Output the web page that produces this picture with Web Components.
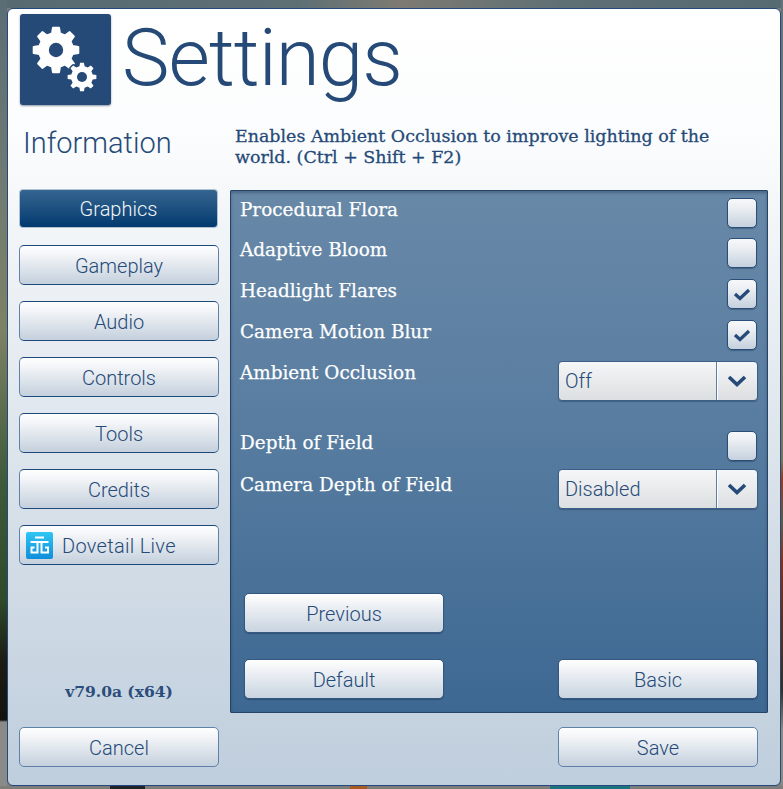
<!DOCTYPE html>
<html>
<head>
<meta charset="utf-8">
<title>Settings</title>
<style>
    html, body { margin: 0; height: 789px; overflow: hidden; }
    body {
        font-family: "Roboto", "Liberation Sans", sans-serif;
        background-color: #7d7d7b;
        background-image:
            linear-gradient(90deg, #7d7d7b 0 110px, #20242a 110px 145px, #7d7d7b 145px 350px, #a85a22 350px 367px, #7d7d7b 367px 550px, #1b7480 550px 630px, #7d7d7b 630px),
            linear-gradient(180deg, #5a6d75 0, #6f7a72 180px, #7e8264 330px, #3f5a3a 480px, #2f4a2a 600px, #1c1c14 660px, #14140f 720px, #8a8a88 722px),
            linear-gradient(180deg, #66737a 0, #7f8270 300px, #75755a 460px, #9a3a1e 480px, #5c5c52 520px, #8c3018 560px, #30302a 690px, #8a8a88 730px),
            linear-gradient(90deg, #566a72 0, #5f7075 300px, #7d7a72 400px, #5f7075 560px, #566a72 783px);
        background-size: 783px 3px, 7px 789px, 2px 789px, 783px 8px;
        background-position: 0 786px, 0 0, 781px 0, 0 0;
        background-repeat: no-repeat;
    }
</style>
</head>
<body>

<settings-dialog>
    <span slot="title">Settings</span>
    <span slot="info-label">Information</span>
    <span slot="info-text">Enables Ambient Occlusion to improve lighting of the world. (Ctrl + Shift + F2)</span>

    <st-button slot="nav" selected>Graphics</st-button>
    <st-button slot="nav">Gameplay</st-button>
    <st-button slot="nav">Audio</st-button>
    <st-button slot="nav">Controls</st-button>
    <st-button slot="nav">Tools</st-button>
    <st-button slot="nav">Credits</st-button>
    <st-button slot="nav" logo>Dovetail Live</st-button>
    <span slot="version">v79.0a (x64)</span>

    <option-row slot="options">Procedural Flora<st-check slot="control"></st-check></option-row>
    <option-row slot="options" style="margin-top:-1px">Adaptive Bloom<st-check slot="control"></st-check></option-row>
    <option-row slot="options">Headlight Flares<st-check slot="control" checked></st-check></option-row>
    <option-row slot="options">Camera Motion Blur<st-check slot="control" checked></st-check></option-row>
    <option-row slot="options" style="margin-bottom:19px">Ambient Occlusion<st-select slot="control">Off</st-select></option-row>
    <option-row slot="options" style="margin-bottom:-3px">Depth of Field<st-check slot="control"></st-check></option-row>
    <option-row slot="options" style="--label-top:5px">Camera Depth of Field<st-select slot="control">Disabled</st-select></option-row>

    <st-button slot="previous" lifted>Previous</st-button>
    <st-button slot="panel-left" lifted>Default</st-button>
    <st-button slot="panel-right" lifted>Basic</st-button>

    <st-button slot="cancel" soft>Cancel</st-button>
    <st-button slot="save" soft>Save</st-button>
</settings-dialog>

<script>
const SLAB = '"DejaVu Serif", "Liberation Serif", serif';

// builds a toothed wheel outline around cx,cy
function gearPath(cx, cy, outer, inner, teeth) {
    const step = Math.PI * 2 / teeth;
    let d = '';
    for (let i = 0; i < teeth; i++) {
        const a = i * step - Math.PI / 2;
        const pts = [
            [inner, a - step * 0.30],
            [outer, a - step * 0.17],
            [outer, a + step * 0.17],
            [inner, a + step * 0.30],
        ];
        pts.forEach(([r, t], j) => {
            const x = (cx + Math.cos(t) * r).toFixed(2);
            const y = (cy + Math.sin(t) * r).toFixed(2);
            d += (i === 0 && j === 0 ? 'M' : 'L') + x + ' ' + y;
        });
    }
    return d + 'Z';
}

class SettingsDialog extends HTMLElement {
    constructor() {
        super();
        this.attachShadow({ mode: 'open' });
        this.shadowRoot.innerHTML = `
        <style>
            :host {
                display: flex;
                flex-direction: column;
                box-sizing: border-box;
                width: 774px;
                height: 778px;
                margin: 8px 0 0 7px;
                padding: 5px 12px 18px 11px;
                border: 1px solid #24497a;
                border-radius: 6px;
                background: linear-gradient(180deg, #ffffff 0, #fbfcfd 130px, #eef2f6 260px, #d3dde7 540px, #bfcedd 100%);
                color: #264a78;
                font-family: "Roboto", "Liberation Sans", sans-serif;
            }
            header { display: flex; align-items: flex-start; height: 91px; }
            .logo {
                flex: none;
                width: 91px;
                height: 91px;
                margin-left: 1px;
                border-radius: 3px;
                background: #264a78;
                box-shadow: 0 1px 2px rgba(30, 50, 80, .5);
            }
            .title {
                margin: -11px 0 0 11px;
                font-size: 80px;
                font-weight: 300;
                line-height: 110px;
                letter-spacing: -.9px;
                color: #264a78;
            }
            .info { display: flex; height: 85px; }
            .info-label { width: 216px; padding: 19px 0 0 4px; box-sizing: border-box; font-size: 29px; font-weight: 300; line-height: 38px; }
            .info-text { width: 500px; padding-top: 21px; font-family: ${SLAB}; font-size: 17.45px; line-height: 21px; color: #264a78; -webkit-text-stroke: .3px #264a78; }
            .main { display: grid; grid-template-columns: 200px 538px; column-gap: 11px; height: 523px; }
            nav { display: flex; flex-direction: column; gap: 16px; }
            .version { margin-top: auto; padding-bottom: 11px; text-align: center; font-family: ${SLAB}; font-size: 15.5px; font-weight: 700; line-height: 20px; color: #2b4d7b; }
            .panel {
                display: flex;
                flex-direction: column;
                box-sizing: border-box;
                padding: 7px 9px 13px 9px;
                border: 1px solid #264468;
                border-radius: 1px;
                background: linear-gradient(180deg, #6888a7 0, #5b7fa2 200px, #3d6892 100%);
                box-shadow: inset 0 2px 3px rgba(20, 40, 70, .35);
            }
            .options { display: flex; flex-direction: column; gap: 11px; }
            .panel-bottom { margin-top: auto; display: flex; flex-direction: column; gap: 26px; padding-left: 4px; }
            .bottom-row, .footer { display: flex; justify-content: space-between; }
            .footer { margin-top: 14px; padding-right: 10px; }
            .previous { display: block; }
        </style>
        <header>
            <div class="logo"><svg width="91" height="91" viewBox="0 0 91 91">
                <path id="big" fill="#fff" stroke="#fff" stroke-width="2" stroke-linejoin="round"/>
                <circle cx="36" cy="36" r="7.2" fill="#264a78"/>
                <path id="small" fill="#fff" stroke="#264a78" stroke-width="3" stroke-linejoin="round" paint-order="stroke"/>
                <circle cx="62" cy="63" r="5" fill="#264a78"/>
            </svg></div>
            <div class="title"><slot name="title"></slot></div>
        </header>
        <div class="info">
            <div class="info-label"><slot name="info-label"></slot></div>
            <div class="info-text"><slot name="info-text"></slot></div>
        </div>
        <div class="main">
            <nav>
                <slot name="nav" style="display:contents"></slot>
                <div class="version"><slot name="version"></slot></div>
            </nav>
            <section class="panel">
                <div class="options"><slot name="options"></slot></div>
                <div class="panel-bottom">
                    <div class="previous"><slot name="previous"></slot></div>
                    <div class="bottom-row"><slot name="panel-left"></slot><slot name="panel-right"></slot></div>
                </div>
            </section>
        </div>
        <div class="footer"><slot name="cancel"></slot><slot name="save"></slot></div>`;
        this.shadowRoot.getElementById('big').setAttribute('d', gearPath(36, 36, 22.5, 17, 8));
        this.shadowRoot.getElementById('small').setAttribute('d', gearPath(62, 63, 14.5, 11, 8));
    }
}

class StButton extends HTMLElement {
    constructor() {
        super();
        this.attachShadow({ mode: 'open' });
        this.shadowRoot.innerHTML = `
        <style>
            :host {
                display: flex;
                align-items: center;
                justify-content: center;
                box-sizing: border-box;
                position: relative;
                width: 200px;
                height: 40px;
                padding-top: 1px;
                border: 1px solid #5f83a8;
                border-top-color: #1d4a7c;
                border-bottom-color: #1d4a7c;
                border-radius: 5px;
                background: linear-gradient(180deg, #ffffff 0, #f2f4f7 25%, #c4d0dd 100%);
                color: #264a78;
                font-family: "Roboto", "Liberation Sans", sans-serif;
                font-size: 20px;
                font-weight: 300;
                white-space: nowrap;
            }
            :host([soft]) { border: 1.5px solid #5f83a8; }
            :host([lifted]) {
                border-color: #34587f;
                box-shadow: 0 1px 1px rgba(20, 40, 70, .4);
                background: linear-gradient(180deg, #ffffff 0, #eef1f5 30%, #c8d4e0 100%);
            }
            :host([selected]) {
                width: 197px;
                height: 37px;
                margin: 0 0 2px 1px;
                padding-top: 0;
                border: none;
                border-radius: 3px;
                background: linear-gradient(180deg, #356590 0, #1d5080 50%, #003a70 100%);
                box-shadow: 0 0 0 1px rgba(100, 130, 165, .45);
                color: #f2f5f8;
            }
            :host([logo]) { justify-content: flex-start; padding-left: 42px; letter-spacing: .3px; }
            svg { display: none; position: absolute; left: 6px; top: 6px; }
            :host([logo]) svg { display: block; }
        </style>
        <svg width="27" height="27" viewBox="0 0 27 27">
            <defs><linearGradient id="dt" x1="0" y1="0" x2="0" y2="1"><stop offset="0" stop-color="#2fc6f4"/><stop offset="1" stop-color="#0e8edb"/></linearGradient></defs>
            <rect width="27" height="27" rx="2" fill="url(#dt)"/>
            <path fill="none" stroke="#fff" stroke-width="2" d="M9 5.5h9M4.5 10h18M11.5 10v10.5h-6v-5h3M15.5 10v10.5h6.5v-5h-3"/>
        </svg>
        <slot></slot>`;
    }
}

class StCheck extends HTMLElement {
    constructor() {
        super();
        this.attachShadow({ mode: 'open' });
        this.shadowRoot.innerHTML = `
        <style>
            :host {
                display: flex;
                align-items: center;
                justify-content: center;
                box-sizing: border-box;
                width: 30px;
                height: 30px;
                margin-right: 1px;
                border: 1px solid #2a4e78;
                border-radius: 5px;
                background: linear-gradient(180deg, #f7f8fa 0, #eceff3 30%, #c5d1de 100%);
                box-shadow: 0 1px 1px rgba(20, 40, 70, .35);
            }
            svg { display: none; }
            :host([checked]) svg { display: block; }
        </style>
        <svg width="18" height="14" viewBox="0 0 18 14"><path d="M2 7l5 4.5L16 3" fill="none" stroke="#264a78" stroke-width="3.2"/></svg>`;
    }
}

class StSelect extends HTMLElement {
    constructor() {
        super();
        this.attachShadow({ mode: 'open' });
        this.shadowRoot.innerHTML = `
        <style>
            :host {
                display: flex;
                box-sizing: border-box;
                width: 200px;
                height: 40px;
                border: 1px solid #3a5f88;
                border-radius: 4px;
                background: linear-gradient(180deg, #f5f6f7 0, #dcdfe1 100%);
                box-shadow: 0 1px 1px rgba(20, 40, 70, .35);
                color: #264a78;
                -webkit-text-stroke: 0;
                font-family: "Roboto", "Liberation Sans", sans-serif;
                font-size: 20px;
                font-weight: 300;
            }
            .value { flex: 1; display: flex; align-items: center; padding-left: 6px; }
            .arrow { flex: none; display: flex; align-items: center; justify-content: center; width: 40px; border-left: 1px solid #5f7f9f; box-shadow: inset 1px 0 0 #fff; }
        </style>
        <div class="value"><slot></slot></div>
        <div class="arrow"><svg width="20" height="12" viewBox="0 0 20 12"><path d="M2 2l8 7.5L18 2" fill="none" stroke="#264a78" stroke-width="3.6"/></svg></div>`;
    }
}

class OptionRow extends HTMLElement {
    constructor() {
        super();
        this.attachShadow({ mode: 'open' });
        this.shadowRoot.innerHTML = `
        <style>
            :host {
                display: flex;
                justify-content: space-between;
                align-items: flex-start;
                color: #fff;
                font-family: ${SLAB};
                font-size: 18.4px;
                line-height: 22px;
                -webkit-text-stroke: .25px #fff;
            }
            .label { padding-top: var(--label-top, 1px); }
        </style>
        <div class="label"><slot></slot></div>
        <slot name="control"></slot>`;
    }
}

customElements.define('settings-dialog', SettingsDialog);
customElements.define('st-button', StButton);
customElements.define('st-check', StCheck);
customElements.define('st-select', StSelect);
customElements.define('option-row', OptionRow);
</script>
</body>
</html>
